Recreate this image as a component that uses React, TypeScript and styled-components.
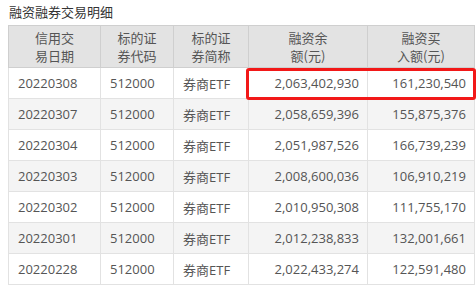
import styled, { createGlobalStyle } from "styled-components";

const GlobalStyle = createGlobalStyle`
    html, body { margin: 0; padding: 0; background: #fff; }
    body { font-family: "Open Sans", "Noto Sans CJK SC", sans-serif; }
`;

const Page = styled.div`
    width: 476px;
    height: 286px;
    overflow: hidden;
    padding: 3px 0 0 8px;
    box-sizing: border-box;
`;

const Title = styled.div`
    font-family: "Noto Sans CJK SC", sans-serif;
    font-size: 13px;
    line-height: 18px;
    color: #333;
    padding-left: 1px;
    margin-bottom: 4px;
`;

const TableWrap = styled.div`
    position: relative;
    width: 466px;
`;

const Table = styled.table`
    border-collapse: collapse;
    table-layout: fixed;
    width: 466px;
    font-size: 13px;
    color: #555;
`;

const Th = styled.th`
    background: #e3e3e3;
    border: 1px solid #cfcfcf;
    font-family: "Noto Sans CJK SC", sans-serif;
    font-weight: normal;
    color: #555;
    line-height: 18px;
    height: 41px;
    padding: 0 4px;
    text-align: center;
`;

const Row = styled.tr<{ $alt: boolean }>`
    background: ${(p) => (p.$alt ? "#f4f4f4" : "#fff")};
`;

const Td = styled.td<{ $num?: boolean }>`
    border: 1px solid #e2e2e2;
    height: 30px;
    padding: 0 ${(p) => (p.$num ? "8px" : "4px")} 0 ${(p) => (p.$num ? "4px" : "9px")};
    text-align: ${(p) => (p.$num ? "right" : "left")};
    white-space: nowrap;
`;

const Highlight = styled.div`
    position: absolute;
    left: 238px;
    top: 43px;
    width: 230px;
    height: 32px;
    border: 3px solid #f21818;
    border-radius: 3px;
    box-sizing: border-box;
    pointer-events: none;
`;

const cols = [92, 73, 75, 119, 107];

const rows = [
    ["20220308", "2,063,402,930", "161,230,540"],
    ["20220307", "2,058,659,396", "155,875,376"],
    ["20220304", "2,051,987,526", "166,739,239"],
    ["20220303", "2,008,600,036", "106,910,219"],
    ["20220302", "2,010,950,308", "111,755,170"],
    ["20220301", "2,012,238,833", "132,001,661"],
    ["20220228", "2,022,433,274", "122,591,480"],
];

export default function App() {
    return (
        <>
            <GlobalStyle />
            <Page>
                <Title>融资融券交易明细</Title>
                <TableWrap>
                    <Table>
                        <colgroup>
                            {cols.map((w, i) => (
                                <col key={i} style={{ width: w }} />
                            ))}
                        </colgroup>
                        <thead>
                            <tr>
                                <Th>信用交<br />易日期</Th>
                                <Th>标的证<br />券代码</Th>
                                <Th>标的证<br />券简称</Th>
                                <Th>融资余<br />额(元)</Th>
                                <Th>融资买<br />入额(元)</Th>
                            </tr>
                        </thead>
                        <tbody>
                            {rows.map((r, i) => (
                                <Row key={r[0]} $alt={i % 2 === 1}>
                                    <Td>{r[0]}</Td>
                                    <Td>512000</Td>
                                    <Td>券商ETF</Td>
                                    <Td $num>{r[1]}</Td>
                                    <Td $num>{r[2]}</Td>
                                </Row>
                            ))}
                        </tbody>
                    </Table>
                    <Highlight />
                </TableWrap>
            </Page>
        </>
    );
}
